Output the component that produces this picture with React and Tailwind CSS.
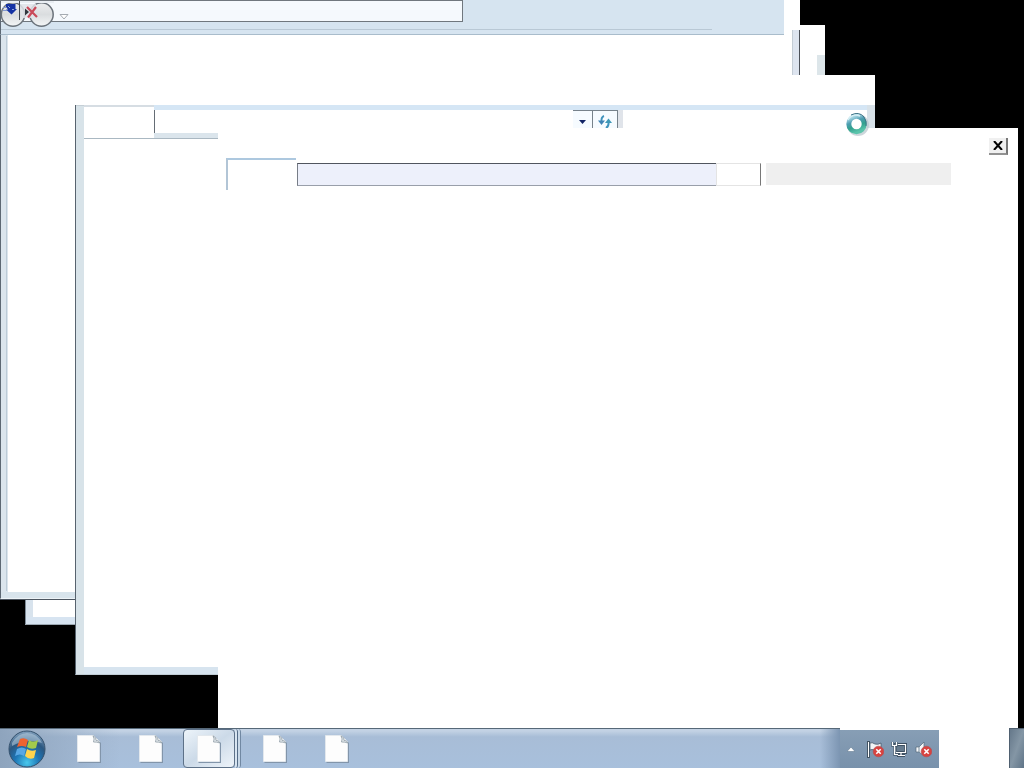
import React from 'react';

function NavButtons() {
  return (
    <svg className="absolute left-0 top-0" width="72" height="28" viewBox="0 0 72 28" aria-hidden="true">
      <defs>
        <linearGradient id="orb" x1="0" y1="0" x2="0" y2="1">
          <stop offset="0" stopColor="#eceeef" />
          <stop offset="0.5" stopColor="#dadddf" />
          <stop offset="1" stopColor="#f4f6f7" />
        </linearGradient>
      </defs>
      <circle cx="13" cy="14.500" r="11.700" fill="url(#orb)" stroke="#6b737b" strokeWidth="1.500" />
      <circle cx="41.500" cy="14.500" r="11.700" fill="url(#orb)" stroke="#6b737b" strokeWidth="1.500" />
      <path d="M1 1 H54 V3 H1 Z" fill="#e9eef3" />
      <path d="M19 4 H36 V18 H22 Z" fill="#dfe3e8" opacity=".85" />
      <path d="M0 .5 H72" stroke="#70777e" />
      <path d="M6 4 H15.500 V9 H17 L11.500 14.500 L6 9.500 H8 L6 7 Z" fill="#1533a4" />
      <path d="M8 6 L10 8 M12 9.500 H14" stroke="#8ea5df" />
      <path d="M3 7.500 H6 M3 10.500 H7" stroke="#8398d0" />
      <path d="M19.500 1 V20" stroke="#444b54" />
      <path d="M25 8.500 L29 12 L25 15.500 Z" fill="#31363d" />
      <path d="M27 7 L37 17 M36 7 L28 17.500" stroke="#c94958" strokeWidth="2.200" />
      <path d="M60 14.500 H68 L64 19 Z" fill="#fff" stroke="#a4abb2" />
    </svg>
  );
}

function BackWindow() {
  return (
    <section aria-label="Window 1" className="absolute left-0 top-0 flex h-[600px] w-[800px] flex-col border-b border-[#4c5560] bg-white">
      <header className="mr-4 h-[35px] shrink-0 border-b border-l border-b-[#a9bccb] border-l-[#5d6873] bg-[#d6e4f0]">
        <div className="flex h-[22px] w-[462px] border-b border-r border-t border-[#70777e] bg-[#f5f9fd]" />
        <div className="mr-[72px] mt-[7px] h-px bg-[#b9c8d5]" />
        <NavButtons />
      </header>
      <div className="flex flex-1">
        <div className="w-2 border-l border-[#5d6873] bg-[#dbe5ed] p-px">
          <div className="ml-1 h-full w-px bg-[#bccbd7]" />
        </div>
        <div className="flex-1" />
        <div className="-mt-[5px] w-2 border-l border-r border-l-[#c3ccd5] border-r-[#4b5058] bg-[#dde4ef]" />
      </div>
      <div className="h-[7px] shrink-0 border-b border-l border-b-[#edf3f7] border-l-[#5d6873] bg-[#d8e4ec]" />
    </section>
  );
}

function MiddleWindow() {
  return (
    <section aria-label="Window 2" className="absolute left-[25px] top-[25px] flex h-[600px] w-[800px] flex-col border-b border-[#9ca8b2] bg-white pt-[30px]">
      <div className="flex flex-1">
        <div className="w-2 border-l border-[#7d8a96] bg-[#d8e3ed]" />
        <div className="flex-1" />
        <div className="w-2 bg-[#dde6ea]" />
      </div>
      <div className="h-[7px] shrink-0 border-l border-[#7d8a96] bg-[#d7e4f1]" />
    </section>
  );
}

function FrontWindow() {
  return (
    <section aria-label="Window 3" className="absolute left-[75px] top-[75px] flex h-[600px] w-[800px] flex-col bg-white pt-[30px]">
      <div className="flex flex-1 border-b border-l border-b-[#c0ccd4] border-l-[#57636e]">
        <div className="w-2 border-t border-[#c5cfd6] bg-[#d8e3e9]" />
        <div className="flex min-w-0 flex-1 flex-col">
          <div className="flex h-[34px] shrink-0 border-b border-[#aab8c2]">
            <div className="w-[70px] border-t-2 border-[#d6dde3]" />
            <div className="flex min-w-0 flex-1 flex-col border-t-[5px] border-[#d5e6f5]">
              <div className="flex h-[23px] border-l border-[#656d75]">
                <div className="w-[418px]" />
                <button aria-label="Address history" className="flex w-[19px] items-center justify-center border-t border-[#77828b] bg-[#f6fbff]">
                  <svg width="7" height="4" viewBox="0 0 7 4"><path d="M0 0 H7 L3.500 4 Z" fill="#132465" /></svg>
                </button>
                <button aria-label="Refresh" className="flex w-[26px] items-center justify-center border-x border-t border-[#77828b] bg-[#f6fbff]">
                  <svg width="14" height="14" viewBox="0 0 14 14" fill="none" stroke="#3f93bc" strokeWidth="2">
                    <path d="M6 1 Q3 2 3.500 7" /><path d="M0 5.500 H7 L3.500 10 Z" fill="#3f83b5" stroke="none" />
                    <path d="M8 13 Q11 11 10.500 7" /><path d="M7 8 H14 L10.500 3.500 Z" fill="#3e98b7" stroke="none" />
                  </svg>
                </button>
                <div className="w-[5px] bg-[#e0e4ea]" />
              </div>
              <div className="h-[5px] bg-[#dbe5ec]" />
            </div>
          </div>
          <div className="flex-1" />
          <div className="h-[7px] shrink-0 bg-[#d7e4ef]" />
        </div>
        <div className="w-2 bg-[#d8e2e9]" />
      </div>
    </section>
  );
}

function DialogWindow() {
  return (
    <section aria-label="Window 4" className="absolute left-[218px] top-32 flex h-[600px] w-[800px] flex-col bg-white">
      <header className="flex h-[30px] shrink-0 justify-end pr-2.5 pt-2.5">
        <button aria-label="Close" className="flex h-[17px] w-[19px] items-center justify-center border-b-2 border-r-2 border-b-[#929292] border-r-[#777] bg-[#f0f0f0]">
          <svg width="10" height="9" viewBox="0 0 10 9"><path d="M1 0 L9 9 M9 0 L1 9" stroke="#000" strokeWidth="2" /></svg>
        </button>
      </header>
      <div className="flex pl-2">
        <div className="mr-px h-8 w-[70px] border-l-2 border-t-2 border-l-[#b2c5d6] border-t-[#adc8df]" />
        <div className="mt-[5px] flex h-[23px] w-[464px]">
          <input aria-label="Address" className="min-w-0 flex-1 border-b border-l border-t border-b-[#999faa] border-l-[#777d87] border-t-[#50555e] bg-[#edf0fb] outline-none" />
          <input aria-label="Address end" className="w-[45px] border border-[#e4e4e4] border-r-[#777] bg-white outline-none" />
        </div>
        <input aria-label="Search" className="ml-[5px] mt-[5px] h-[22px] w-[185px] bg-[#efefef] outline-none" />
      </div>
    </section>
  );
}

function BusyCursor() {
  return (
    <svg className="absolute left-[844px] top-[112px]" width="26" height="24" viewBox="0 0 26 24" aria-hidden="true">
      <defs>
        <linearGradient id="busy" x1="0.200" y1="0" x2="0.600" y2="1">
          <stop offset="0" stopColor="#b9e3ee" />
          <stop offset="0.350" stopColor="#4e9db1" />
          <stop offset="0.650" stopColor="#31a18e" />
          <stop offset="1" stopColor="#5bc4ab" />
        </linearGradient>
      </defs>
      <circle cx="14" cy="13" r="8.500" fill="none" stroke="#b8c5cc" strokeWidth="5" opacity=".7" />
      <circle cx="12.500" cy="12" r="7.700" fill="#fff" stroke="url(#busy)" strokeWidth="5" />
      <path d="M4 8 Q8 1 16 4" fill="none" stroke="#d5eef4" strokeWidth="1.500" />
      <path d="M7 3 Q15 -1 20 5 Q23 9 22 14" fill="none" stroke="#3d7488" strokeWidth="1" />
    </svg>
  );
}

function StartOrb() {
  return (
    <svg width="38" height="38" viewBox="0 0 38 38" aria-hidden="true">
      <defs>
        <radialGradient id="start" cx=".5" cy=".88" r=".85">
          <stop offset="0" stopColor="#49c8ec" />
          <stop offset=".4" stopColor="#1d75b5" />
          <stop offset=".7" stopColor="#2b5780" />
          <stop offset="1" stopColor="#7c9cba" />
        </radialGradient>
      </defs>
      <circle cx="19" cy="19" r="18" fill="url(#start)" stroke="#35516c" />
      <path d="M4 13 Q10 3 19 3 Q29 3 34 13 Q19 8 4 16 Z" fill="#c4d7e5" opacity=".5" />
      <path d="M12 9 Q16 7 20 10 L18 17 Q14 15 9 17 Z" fill="#ed6330" />
      <path d="M21 10 Q25 13 30 10 L28 18 Q23 20 19 17 Z" fill="#a2cb4c" />
      <path d="M9 19 Q14 16 18 19 L16 26 Q12 23 7 26 Z" fill="#58a7e4" />
      <path d="M19 19 Q23 22 28 20 L26 28 Q21 30 17 26 Z" fill="#ffd34d" />
    </svg>
  );
}

function FileIcon() {
  return (
    <svg width="24" height="28" viewBox="0 0 24 28" aria-hidden="true">
      <path d="M1.500 1.500 H17 L24 8 V28 H1.500 Z" fill="#8295aa" />
      <path d="M.5 .5 H16.500 L22.500 6.500 V26.500 H.5 Z" fill="#fdfdfd" stroke="#e3e8ed" />
      <path d="M16 .8 Q20 2.500 19 5.500 Q22 5 22.800 8 Q20 6.800 16.500 7 Q18 4 16 .8 Z" fill="#e7ecef" stroke="#8d9ba5" strokeWidth=".8" />
    </svg>
  );
}

function ErrorBadge() {
  return (
    <g>
      <circle cx="11.500" cy="10.500" r="5.300" fill="#d84340" stroke="#b94e50" strokeWidth=".7" />
      <path d="M9.300 8.300 L13.700 12.700 M13.700 8.300 L9.300 12.700" stroke="#fff" strokeWidth="1.600" />
    </g>
  );
}

function Taskbar() {
  return (
    <nav aria-label="Taskbar" className="flex h-10 shrink-0 bg-white">
      <div className="flex min-w-0 flex-1">
        <div className="flex min-w-0 flex-1 items-stretch border-t border-[#566878] bg-linear-to-b from-[#c3d2e4] from-5% via-[#a8bdd7] via-20% to-[#a8c0dc]">
          <div className="flex bg-linear-to-r from-[#8ea4bd] to-transparent">
            <button aria-label="Start" className="flex w-[58px] items-center pl-2"><StartOrb /></button>
            <button aria-label="File 1" className="flex w-[62px] items-center justify-center"><FileIcon /></button>
          </div>
          <button aria-label="File 2" className="flex w-[62px] items-center justify-center"><FileIcon /></button>
          <button aria-label="File 3" className="ml-px flex w-[52px] items-center justify-center rounded-sm border border-[#5d7188] bg-linear-to-br from-[#edf4fa] via-[#ccdae8] to-[#eef4fa]"><FileIcon /></button>
          <div className="w-[3px] rounded-r-sm border-r border-[#536b86] bg-[#d8e5f1]" />
          <div className="mr-[3px] w-[3px] rounded-r-sm border-r border-[#7188a2] bg-[#c9d9e8]" />
          <button aria-label="File 4" className="flex w-[62px] items-center justify-center"><FileIcon /></button>
          <button aria-label="File 5" className="flex w-[62px] items-center justify-center"><FileIcon /></button>
          <div className="min-w-0 flex-1" />
          <div className="w-5 bg-linear-to-r from-transparent to-[#7c95b2]" />
        </div>
        <div className="mt-0.5 flex w-[99px] items-center bg-linear-to-b from-[#879eb5] to-[#7891ab] pl-[7px]">
          <button aria-label="Show hidden icons" className="flex w-2 justify-center">
            <svg width="8" height="5" viewBox="0 0 8 5"><path d="M0 4.500 L4 0 L8 4.500 Z" fill="#fff" stroke="#526c85" strokeWidth=".5" /></svg>
          </button>
          <button aria-label="Action center" className="ml-3">
            <svg width="17" height="17" viewBox="0 0 17 17">
              <path d="M1.500 0 V17" stroke="#435463" strokeWidth="3" />
              <path d="M3 2 Q5 1 8 3 Q11 4 14 2 V10 Q10 12 7 9 Q5 8 3 9 Z" fill="#f2f5f7" stroke="#485b6c" strokeWidth=".8" />
              <path d="M1.500 1 V16" stroke="#fff" />
              <ErrorBadge />
            </svg>
          </button>
          <button aria-label="Network" className="ml-[7px]">
            <svg width="17" height="17" viewBox="0 0 17 17" fill="none">
              <path d="M4.500 3.500 H14.500 V11.500 H4.500 Z" fill="#667b8e" stroke="#3e5062" strokeWidth="3" />
              <path d="M10 12 V14.500 M6 14.500 H14" stroke="#3e5062" strokeWidth="3" />
              <path d="M4.500 3.500 H14.500 V11.500 H4.500 Z M10 12 V14.500 M6 14.500 H14" stroke="#fff" strokeWidth="1.200" />
              <path d="M1.500 1 V4.500 H5.500 V1 M3.500 5 V13.500 H7" stroke="#44586b" strokeWidth="2.500" />
              <path d="M1.500 1 V4.500 H5.500 V1 M3.500 5 V13.500 H7" stroke="#fff" strokeWidth="1.200" />
            </svg>
          </button>
          <button aria-label="Volume" className="ml-[7px]">
            <svg width="17" height="17" viewBox="0 0 17 17">
              <path d="M1 6 H4 L9 1 V15 L4 11 H1 Z" fill="#f6f8fa" stroke="#54687a" strokeWidth=".7" /><path d="M4 5 V12" stroke="#778a9b" />
              <ErrorBadge />
            </svg>
          </button>
        </div>
      </div>
      <div className="w-[70px]" />
      <button aria-label="Show desktop" className="w-[15px] border-l border-t border-[#4f6070] bg-linear-to-br from-[#65788a] via-[#8496a5] to-[#5f7487]" />
    </nav>
  );
}

export default function App() {
  return (
    <div className="flex h-screen flex-col overflow-hidden bg-black font-['Liberation_Sans',sans-serif]">
      <main className="relative min-h-0 flex-1 overflow-hidden">
        <MiddleWindow />
        <BackWindow />
        <FrontWindow />
        <DialogWindow />
        <BusyCursor />
      </main>
      <Taskbar />
    </div>
  );
}
